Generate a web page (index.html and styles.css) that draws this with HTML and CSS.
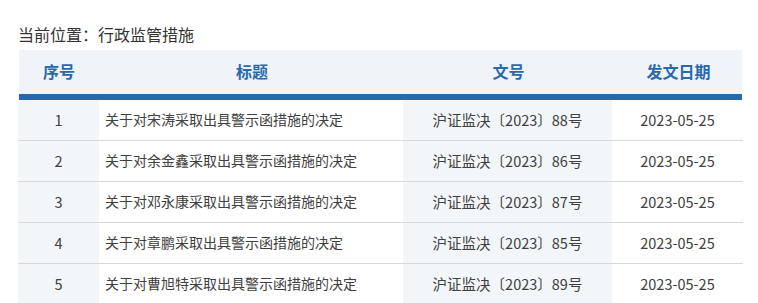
FILE: index.html
```html
<!DOCTYPE html>
<html lang="zh-CN">
<head>
<meta charset="utf-8">
<title>行政监管措施</title>
<link rel="stylesheet" href="styles.css">
</head>
<body>
<div class="page">
  <div class="crumb">当前位置：行政监管措施</div>
  <div class="table">
    <div class="row head">
      <div class="cell c1">序号</div>
      <div class="cell c2">标题</div>
      <div class="cell c3">文号</div>
      <div class="cell c4">发文日期</div>
    </div>
    <div class="row">
      <div class="cell c1">1</div>
      <div class="cell c2 title">关于对宋涛采取出具警示函措施的决定</div>
      <div class="cell c3">沪证监决〔2023〕88号</div>
      <div class="cell c4">2023-05-25</div>
    </div>
    <div class="row">
      <div class="cell c1">2</div>
      <div class="cell c2 title">关于对余金鑫采取出具警示函措施的决定</div>
      <div class="cell c3">沪证监决〔2023〕86号</div>
      <div class="cell c4">2023-05-25</div>
    </div>
    <div class="row">
      <div class="cell c1">3</div>
      <div class="cell c2 title">关于对邓永康采取出具警示函措施的决定</div>
      <div class="cell c3">沪证监决〔2023〕87号</div>
      <div class="cell c4">2023-05-25</div>
    </div>
    <div class="row">
      <div class="cell c1">4</div>
      <div class="cell c2 title">关于对章鹏采取出具警示函措施的决定</div>
      <div class="cell c3">沪证监决〔2023〕85号</div>
      <div class="cell c4">2023-05-25</div>
    </div>
    <div class="row">
      <div class="cell c1">5</div>
      <div class="cell c2 title">关于对曹旭特采取出具警示函措施的决定</div>
      <div class="cell c3">沪证监决〔2023〕89号</div>
      <div class="cell c4">2023-05-25</div>
    </div>
  </div>
</div>
</body>
</html>
```

FILE: styles.css
```css
html, body {
  margin: 0;
  padding: 0;
  background: #ffffff;
}
body {
  font-family: "Microsoft YaHei", "Noto Sans CJK SC", "Noto Sans", sans-serif;
  color: #333333;
}
.page {
  padding: 22px 15px 0 18px;
}
.crumb {
  font-size: 16px;
  line-height: 24px;
  height: 24px;
  margin-bottom: 4px;
  color: #333333;
}
.table {
  width: 725px;
}
.row {
  display: grid;
  grid-template-columns: 81px 304px 209px 131px;
  height: 40px;
  border-bottom: 1px solid #d6d8db;
}
.row.head {
  height: 44px;
  border-bottom: 6px solid #246aad;
  background: #f0f4f9;
  margin-left: 1px;
  margin-right: 1px;
}
.row.head .cell {
  background: transparent;
  font-size: 16px;
  font-weight: bold;
  color: #2a69ab;
}
.row.head .c1 { margin-left: -1px; }
.cell {
  display: flex;
  align-items: center;
  justify-content: center;
  padding-bottom: 2px;
  box-sizing: border-box;
  font-size: 14.5px;
  color: #404040;
  white-space: nowrap;
}
.cell.title {
  justify-content: flex-start;
  padding-left: 6px;
  font-size: 14px;
}
.c1, .c3 {
  background: #f3f6f9;
}
.c2, .c4 {
  background: #ffffff;
}
```
